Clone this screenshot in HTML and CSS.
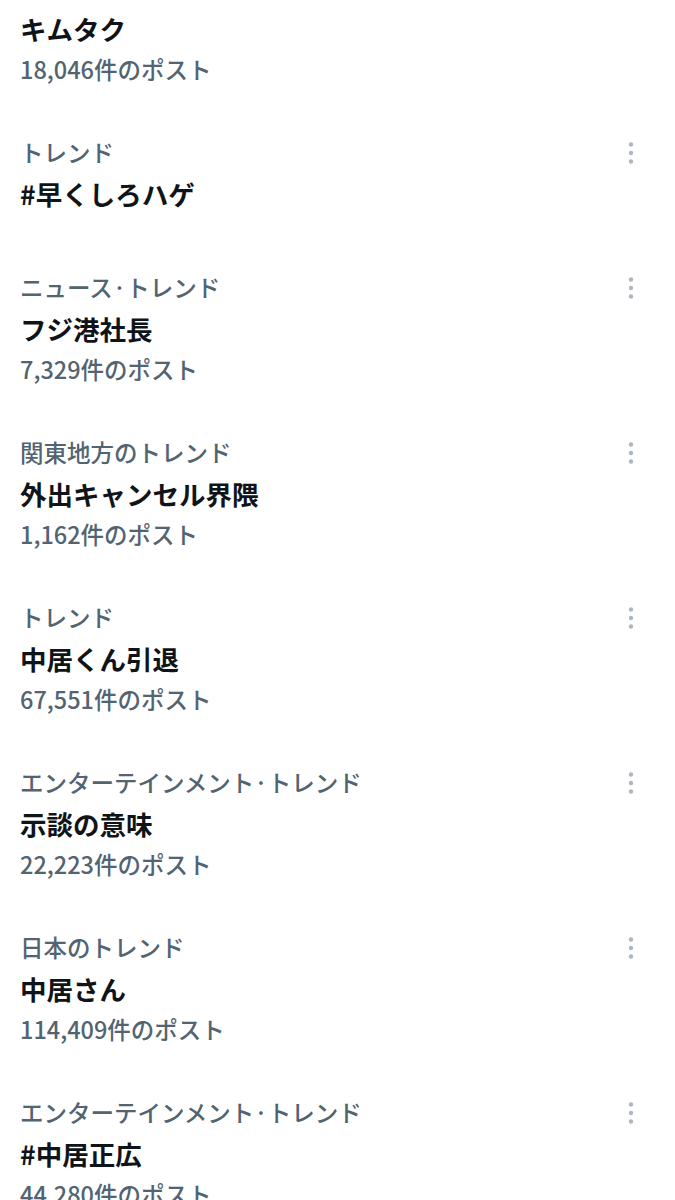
FILE: index.html
```html
<!DOCTYPE html>
<html lang="ja">
<head>
<meta charset="utf-8">
<link rel="stylesheet" href="styles.css">
</head>
<body>
<ul class="trends">
  <li class="trend trend-top">
    <div class="trend-text">
      <div class="title">キムタク</div>
      <div class="count">18,046件のポスト</div>
    </div>
  </li>
  <li class="trend trend-short">
    <div class="trend-text">
      <div class="category">トレンド</div>
      <div class="title">#早くしろハゲ</div>
    </div>
    <button class="more" aria-label="その他"><svg viewBox="0 0 20 41" width="20" height="41"><circle cx="10" cy="12.5" r="2.2"/><circle cx="10" cy="21" r="2.2"/><circle cx="10" cy="29.5" r="2.2"/></svg></button>
  </li>
  <li class="trend">
    <div class="trend-text">
      <div class="category">ニュース·トレンド</div>
      <div class="title">フジ港社長</div>
      <div class="count">7,329件のポスト</div>
    </div>
    <button class="more" aria-label="その他"><svg viewBox="0 0 20 41" width="20" height="41"><circle cx="10" cy="12.5" r="2.2"/><circle cx="10" cy="21" r="2.2"/><circle cx="10" cy="29.5" r="2.2"/></svg></button>
  </li>
  <li class="trend">
    <div class="trend-text">
      <div class="category">関東地方のトレンド</div>
      <div class="title">外出キャンセル界隈</div>
      <div class="count">1,162件のポスト</div>
    </div>
    <button class="more" aria-label="その他"><svg viewBox="0 0 20 41" width="20" height="41"><circle cx="10" cy="12.5" r="2.2"/><circle cx="10" cy="21" r="2.2"/><circle cx="10" cy="29.5" r="2.2"/></svg></button>
  </li>
  <li class="trend">
    <div class="trend-text">
      <div class="category">トレンド</div>
      <div class="title">中居くん引退</div>
      <div class="count">67,551件のポスト</div>
    </div>
    <button class="more" aria-label="その他"><svg viewBox="0 0 20 41" width="20" height="41"><circle cx="10" cy="12.5" r="2.2"/><circle cx="10" cy="21" r="2.2"/><circle cx="10" cy="29.5" r="2.2"/></svg></button>
  </li>
  <li class="trend">
    <div class="trend-text">
      <div class="category">エンターテインメント·トレンド</div>
      <div class="title">示談の意味</div>
      <div class="count">22,223件のポスト</div>
    </div>
    <button class="more" aria-label="その他"><svg viewBox="0 0 20 41" width="20" height="41"><circle cx="10" cy="12.5" r="2.2"/><circle cx="10" cy="21" r="2.2"/><circle cx="10" cy="29.5" r="2.2"/></svg></button>
  </li>
  <li class="trend">
    <div class="trend-text">
      <div class="category">日本のトレンド</div>
      <div class="title">中居さん</div>
      <div class="count">114,409件のポスト</div>
    </div>
    <button class="more" aria-label="その他"><svg viewBox="0 0 20 41" width="20" height="41"><circle cx="10" cy="12.5" r="2.2"/><circle cx="10" cy="21" r="2.2"/><circle cx="10" cy="29.5" r="2.2"/></svg></button>
  </li>
  <li class="trend">
    <div class="trend-text">
      <div class="category">エンターテインメント·トレンド</div>
      <div class="title">#中居正広</div>
      <div class="count">44,280件のポスト</div>
    </div>
    <button class="more" aria-label="その他"><svg viewBox="0 0 20 41" width="20" height="41"><circle cx="10" cy="12.5" r="2.2"/><circle cx="10" cy="21" r="2.2"/><circle cx="10" cy="29.5" r="2.2"/></svg></button>
  </li>
</ul>
</body>
</html>
```

FILE: styles.css
```css
* {
  box-sizing: border-box;
}

html, body {
  margin: 0;
  padding: 0;
  background: #ffffff;
}

body {
  font-family: "Noto Sans CJK JP", "Noto Sans", sans-serif;
  color: #0f1419;
  overflow: hidden;
  height: 1200px;
}

.trends {
  list-style: none;
  margin: 0;
  padding: 0;
}

.trend {
  display: flex;
  align-items: flex-start;
  padding: 21px 34px 21px 20px;
}

.trend-top {
  padding-top: 8px;
}

.trend-short {
  min-height: 135px;
}

.trend-text {
  flex: 1;
  display: flex;
  flex-direction: column;
  min-width: 0;
}

.category,
.count {
  font-size: 23.5px;
  line-height: 41px;
  font-weight: 500;
  color: #536471;
  white-space: nowrap;
}

.title {
  font-size: 26.5px;
  line-height: 41px;
  font-weight: 700;
  color: #0f1419;
  white-space: nowrap;
}

.more {
  flex: none;
  width: 20px;
  height: 41px;
  padding: 0;
  border: 0;
  background: transparent;
  display: flex;
}

.more svg {
  fill: #aeb7bf;
}
```
